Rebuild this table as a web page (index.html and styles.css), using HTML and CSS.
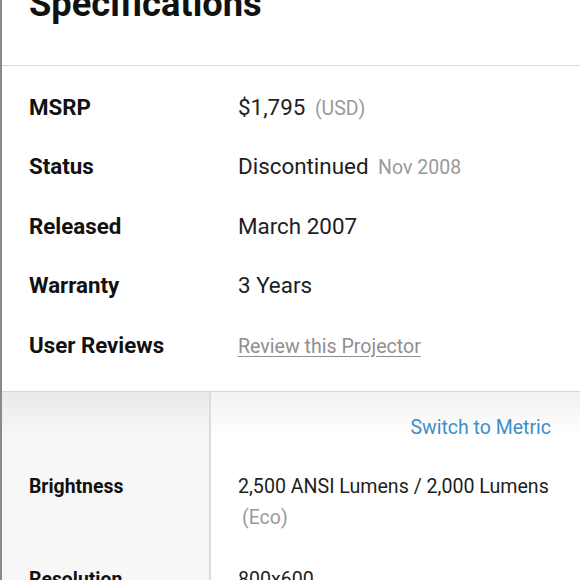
FILE: index.html
```html
<!DOCTYPE html>
<html>
<head>
<meta charset="utf-8">
<link rel="stylesheet" href="styles.css">
</head>
<body>
<div class="page">
  <header class="head">
    <h1 class="title">Specifications</h1>
  </header>
  <section class="summary">
    <div class="row">
      <div class="label">MSRP</div>
      <div class="value">$1,795 <span class="muted">(USD)</span></div>
    </div>
    <div class="row">
      <div class="label">Status</div>
      <div class="value">Discontinued <span class="muted">Nov 2008</span></div>
    </div>
    <div class="row">
      <div class="label">Released</div>
      <div class="value">March 2007</div>
    </div>
    <div class="row">
      <div class="label">Warranty</div>
      <div class="value">3 Years</div>
    </div>
    <div class="row">
      <div class="label">User Reviews</div>
      <div class="value"><a class="review" href="#">Review this Projector</a></div>
    </div>
  </section>
  <section class="details">
    <div class="side"></div>
    <div class="metric"><a class="switch" href="#">Switch to Metric</a></div>
    <div class="side dlabel">Brightness</div>
    <div class="dvalue">2,500 ANSI Lumens / 2,000 Lumens <span class="muted">(Eco)</span></div>
    <div class="side dlabel">Resolution</div>
    <div class="dvalue">800x600</div>
  </section>
</div>
</body>
</html>
```

FILE: styles.css
```css
html, body {
  margin: 0;
  padding: 0;
  background: #fff;
}
body {
  font-family: Roboto, "Liberation Sans", sans-serif;
  color: #1a1a1a;
  overflow: hidden;
}
.page {
  border-left: 2px solid #8a8a8a;
  min-height: 580px;
}
.head {
  margin-top: -16px;
  padding: 0 0 41px 27px;
  border-bottom: 1px solid #d9d9d9;
}
.title {
  margin: 0;
  font-size: 36.3px;
  line-height: 40px;
  font-weight: 700;
  color: #111;
}
.summary {
  padding: 11px 0 16px;
  border-bottom: 1px solid #d6d6d6;
}
.row {
  display: grid;
  grid-template-columns: 209px 1fr;
  height: 59.5px;
  align-items: center;
}
.label {
  padding-left: 27px;
  font-size: 22.3px;
  font-weight: 700;
  color: #111;
}
.value {
  padding-left: 27px;
  font-size: 22.4px;
  color: #1e1e1e;
}
.muted {
  font-size: 19.5px;
  color: #9a9a9a;
  margin-left: 4px;
}
.review {
  color: #8f8f8f;
  font-size: 19.6px;
  text-decoration: underline;
  text-underline-offset: 3px;
}
.details {
  display: grid;
  grid-template-columns: 209px 1fr;
  background-image: linear-gradient(rgba(0,0,0,0.055), rgba(0,0,0,0) 44px);
  background-color: #fff;
}
.side {
  background-color: rgba(0,0,0,0.032);
  border-right: 2px solid #dcdcdc;
}
.metric {
  padding: 24px 29px 0 0;
  height: 24px;
  text-align: right;
  font-size: 19.5px;
  line-height: 24px;
}
.switch {
  color: #3c8fc7;
  text-decoration: none;
}
.dlabel {
  padding-left: 27px;
  padding-top: 31px;
  font-size: 19.4px;
  font-weight: 700;
  line-height: 31px;
  color: #111;
}
.dvalue {
  padding-left: 27px;
  padding-top: 31px;
  font-size: 19.6px;
  line-height: 31px;
  color: #1e1e1e;
}
.dvalue .muted {
  font-size: 19.5px;
}
```
